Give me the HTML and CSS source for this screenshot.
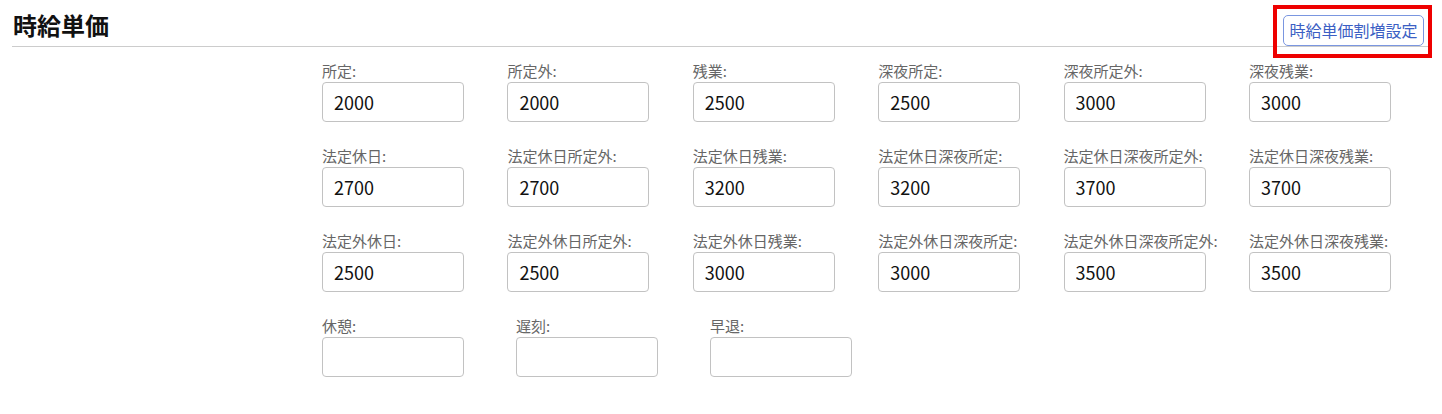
FILE: index.html
```html
<!DOCTYPE html>
<html lang="ja">
<head>
<meta charset="utf-8">
<link rel="stylesheet" href="styles.css">
</head>
<body>
<div class="header">
  <h2 class="title">時給単価</h2>
  <div class="btn-wrap">
    <button class="btn" type="button">時給単価割増設定</button>
  </div>
</div>
<div class="form">
  <div class="grid6">
    <div class="field"><label>所定:</label><input type="text" value="2000"></div>
    <div class="field"><label>所定外:</label><input type="text" value="2000"></div>
    <div class="field"><label>残業:</label><input type="text" value="2500"></div>
    <div class="field"><label>深夜所定:</label><input type="text" value="2500"></div>
    <div class="field"><label>深夜所定外:</label><input type="text" value="3000"></div>
    <div class="field"><label>深夜残業:</label><input type="text" value="3000"></div>

    <div class="field"><label>法定休日:</label><input type="text" value="2700"></div>
    <div class="field"><label>法定休日所定外:</label><input type="text" value="2700"></div>
    <div class="field"><label>法定休日残業:</label><input type="text" value="3200"></div>
    <div class="field"><label>法定休日深夜所定:</label><input type="text" value="3200"></div>
    <div class="field"><label>法定休日深夜所定外:</label><input type="text" value="3700"></div>
    <div class="field"><label>法定休日深夜残業:</label><input type="text" value="3700"></div>

    <div class="field"><label>法定外休日:</label><input type="text" value="2500"></div>
    <div class="field"><label>法定外休日所定外:</label><input type="text" value="2500"></div>
    <div class="field"><label>法定外休日残業:</label><input type="text" value="3000"></div>
    <div class="field"><label>法定外休日深夜所定:</label><input type="text" value="3000"></div>
    <div class="field"><label>法定外休日深夜所定外:</label><input type="text" value="3500"></div>
    <div class="field"><label>法定外休日深夜残業:</label><input type="text" value="3500"></div>
  </div>
  <div class="grid3">
    <div class="field"><label>休憩:</label><input type="text" value=""></div>
    <div class="field"><label>遅刻:</label><input type="text" value=""></div>
    <div class="field"><label>早退:</label><input type="text" value=""></div>
  </div>
</div>
</body>
</html>
```
FILE: styles.css
```css
html, body {
  margin: 0;
  padding: 0;
  background: #fff;
  font-family: "Noto Sans CJK JP", "Noto Sans", sans-serif;
}

.header {
  display: flex;
  justify-content: space-between;
  align-items: flex-end;
  margin: 0 12px;
  height: 46px;
  border-bottom: 1px solid #cccccc;
}

.title {
  margin: 0 0 6px 1px;
  font-size: 24px;
  line-height: 30px;
  font-weight: bold;
  color: #111;
}

.btn-wrap {
  position: relative;
  margin: 0 6px 0 0;
}

.btn-wrap::after {
  content: "";
  position: absolute;
  left: -10px;
  right: -8px;
  top: -10px;
  bottom: -12px;
  border: 4px solid #ee0000;
  pointer-events: none;
}

.btn {
  display: block;
  height: 31px;
  width: 141px;
  padding: 0;
  box-sizing: border-box;
  background: #fff;
  border: 1px solid #7a96e0;
  border-radius: 5px;
  color: #3c5fc4;
  font-family: "Noto Sans CJK JP", sans-serif;
  font-size: 16px;
  line-height: 29px;
}

.form {
  padding: 14px 0 0 322px;
}

.grid6 {
  display: grid;
  grid-template-columns: repeat(6, 142px);
  column-gap: 43.4px;
  row-gap: 24px;
}

.grid3 {
  display: grid;
  grid-template-columns: repeat(3, 142px);
  column-gap: 52px;
  margin-top: 24px;
}

.field label {
  display: block;
  height: 21px;
  font-size: 15px;
  line-height: 20px;
  color: #666;
  white-space: nowrap;
}

.field input {
  display: block;
  width: 142px;
  height: 40px;
  box-sizing: border-box;
  border: 1px solid #c2c2c2;
  border-radius: 4px;
  padding: 0 11px;
  font-family: "Noto Sans CJK JP", sans-serif;
  font-size: 18px;
  color: #111;
  background: #fff;
}
```
